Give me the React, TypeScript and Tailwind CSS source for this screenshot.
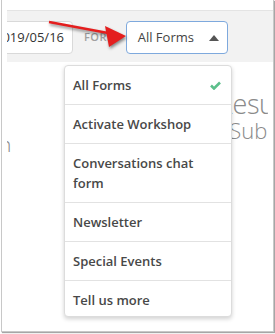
const ITEMS = ["All Forms", "Activate Workshop", "Conversations chat form", "Newsletter", "Special Events", "Tell us more"];

export default function App() {
  return (
    <div className="w-[275px] h-[334px] bg-white font-['Open_Sans',sans-serif]">
      <div className="relative ml-px w-[273px] h-[332px] border-x border-b border-[#c8c8c8] shadow-[1px_1px_1px_rgba(0,0,0,0.35)] overflow-hidden bg-white">
        <div className="pt-[10px] pl-[5px]">
          {/* filter bar */}
          <div className="h-[52px] bg-[#f2f2f2] border-t border-[#e4e4e4] flex items-start pt-[10px] overflow-hidden">
            <div className="ml-[-20px] w-[86px] h-[33px] shrink-0 bg-white border border-[#d9d9d9] rounded-[4px] flex items-center justify-end pr-[8px] text-[13px] text-[#333]">
              2019/05/16
            </div>
            <div className="ml-[11px] h-[33px] flex items-center text-[11px] font-semibold tracking-[0.5px] text-[#a0a0a0]">
              FORM
            </div>
            <div className="ml-[8px] w-[102px] h-[33px] shrink-0 bg-white border border-[#7ea9dd] rounded-[4px] flex items-center pl-[11px] text-[13px] text-[#444]">
              All Forms
              <svg width="10" height="6" viewBox="0 0 10 6" className="ml-auto mr-[8px]">
                <polygon points="0,6 10,6 5,0" fill="#555" />
              </svg>
            </div>
          </div>

          {/* page content behind the menu */}
          <div className="flex w-[261px] overflow-hidden">
            <div className="w-[60px] shrink-0 overflow-hidden pt-[72px]">
              <span className="block ml-[-8px] text-[21px] font-light leading-none text-[#888]">n</span>
            </div>
            <div className="ml-[150px] shrink-0 pt-[27px] text-[#8a8a8a] font-light whitespace-nowrap">
              <div className="text-[27px] leading-[29px] tracking-[-0.5px]">Results</div>
              <div className="text-[22px] leading-[25px] ml-[-42px]">Total Submissions</div>
            </div>
          </div>
        </div>

        {/* dropdown menu */}
        <div className="absolute left-[62px] top-[65px] w-[168px] bg-white border border-[#dcdcdc] rounded-[4px] shadow-[0_2px_4px_rgba(0,0,0,0.18)]">
          {ITEMS.map((item, i) => (
            <div
              key={item}
              className={
                "flex items-start pl-[8px] pr-[10px] text-[13px] leading-[20px] font-semibold text-[#484848] " +
                (i === ITEMS.length - 1 ? "pt-[9px] pb-[6px]" : "py-[9px] border-b border-[#e2e2e2]")
              }
            >
              <span className="pr-[20px]">{item}</span>
              {i === 0 ? (
                <svg width="11" height="9" viewBox="0 0 11 9" className="ml-auto mt-[6px]">
                  <polyline points="1,4.5 4,7.5 10,1.5" fill="none" stroke="#5cbf8b" strokeWidth="2.6" />
                </svg>
              ) : null}
            </div>
          ))}
        </div>

        {/* red annotation arrow */}
        <svg
          width="273"
          height="60"
          viewBox="1 0 273 60"
          className="absolute left-0 top-0 drop-shadow-[1px_2px_1.5px_rgba(0,0,0,0.45)]"
        >
          <line x1="48" y1="22" x2="107" y2="33" stroke="#e41e1e" strokeWidth="2.4" />
          <polygon points="104,26 125,36 108,47" fill="#e41e1e" />
        </svg>
      </div>
    </div>
  );
}
